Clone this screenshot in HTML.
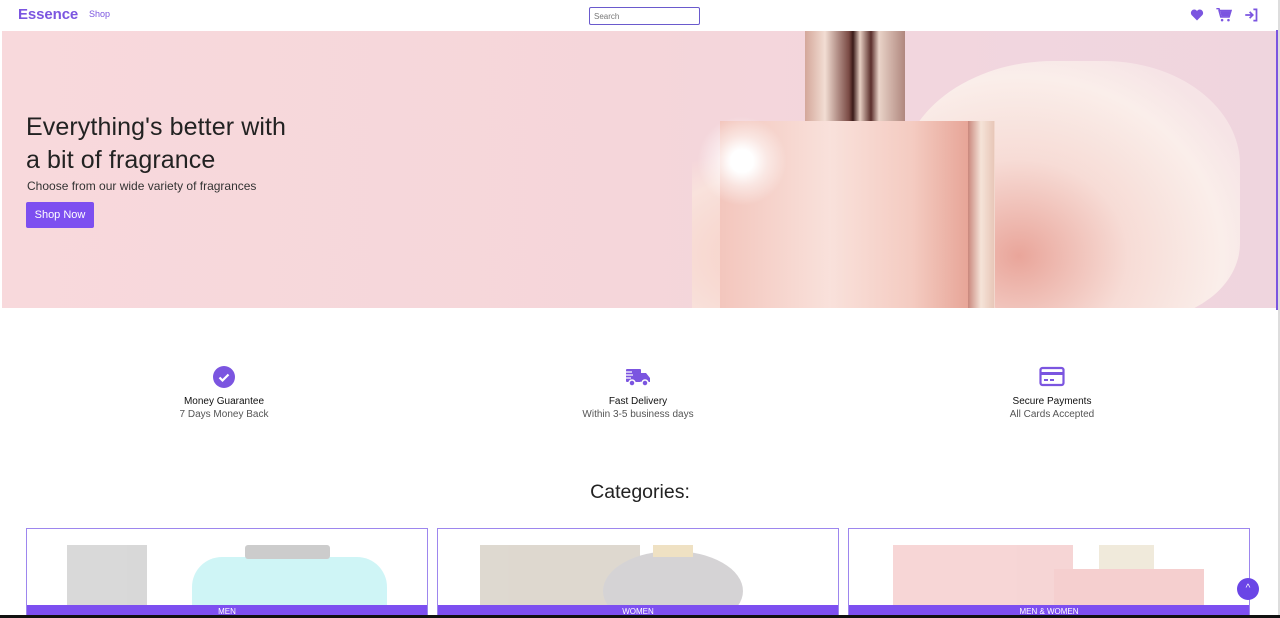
<!DOCTYPE html>
<html><head><meta charset="utf-8"><style>
*{margin:0;padding:0;box-sizing:border-box}
body{width:1280px;height:618px;overflow:hidden;background:#fff;font-family:"Liberation Sans",sans-serif;position:relative}
.nav{position:absolute;left:0;top:0;width:1280px;height:31px;background:#fff}
.logo{position:absolute;left:18px;top:6px;font-size:15px;color:#7b55e0;font-weight:bold;letter-spacing:-0.1px}
.shop{position:absolute;left:89px;top:9px;font-size:9px;color:#7b55e0}
.search{position:absolute;left:589px;top:7px;width:111px;height:18px;border:1px solid #6a5acd;border-radius:2px;font-size:8px;color:#777;padding:4px 4px}
.hero{position:absolute;left:2px;top:31px;width:1274px;height:277px;background:linear-gradient(90deg,#f8d9dc 0%,#f5d6da 50%,#f1d6df 80%,#efd5de 100%);overflow:hidden}
.rbar{position:absolute;left:1276px;top:30px;width:3px;height:280px;background:#7b55e0}
.rgrey{position:absolute;left:1278px;top:0;width:2px;height:618px;background:#ddd}
h1{position:absolute;left:26px;top:111px;font-size:25px;line-height:33px;font-weight:normal;color:#222;letter-spacing:0.1px}
.sub{position:absolute;left:27px;top:179px;font-size:12px;color:#333}
.btn{position:absolute;left:26px;top:202px;width:68px;height:26px;background:#7d4ff0;color:#fff;font-size:11px;border-radius:2px;text-align:center;line-height:26px}
.feat{position:absolute;width:200px;text-align:center}
.feat .t{font-size:10px;color:#111;margin-top:3px}
.feat .s{font-size:10px;color:#555;margin-top:2px}
.cat{position:absolute;left:0;width:1280px;top:481px;text-align:center;font-size:19.5px;color:#222}
.card{position:absolute;top:528px;width:402px;height:90px;border:1px solid #9d86ee;border-bottom:none;overflow:hidden;background:#fff}
.card .img{opacity:.75}
.lab{position:absolute;left:0;bottom:0;width:100%;height:13px;background:#7d4ff0;color:#fff;font-size:8px;text-align:center;line-height:13px}
.bottom{position:absolute;left:0;top:615px;width:1280px;height:3px;background:#111}
.up{position:absolute;left:1237px;top:578px;width:22px;height:22px;border-radius:50%;background:#6a45e6;color:#fff;font-size:10px;text-align:center;line-height:22px}
</style></head><body>
<div class="nav">
<div class="logo">Essence</div><div class="shop">Shop</div>
<div class="search">Search</div>
<svg style="position:absolute;left:1190px;top:9px" width="14" height="12" viewBox="0 0 24 22"><path d="M12 21 2 11C-1 7 2 1 7 1c2 0 4 1 5 3 1-2 3-3 5-3 5 0 8 6 5 10z" fill="#7b55e0"/></svg>
<svg style="position:absolute;left:1216px;top:8px" width="16" height="14" viewBox="0 0 24 22"><path d="M0 1h4l1 3h18l-3 10H7L4 3" fill="none" stroke="#7b55e0" stroke-width="2.5"/><path d="M6 5h16l-2.5 8H8z" fill="#7b55e0"/><circle cx="9" cy="19" r="2" fill="#7b55e0"/><circle cx="19" cy="19" r="2" fill="#7b55e0"/></svg>
<svg style="position:absolute;left:1244px;top:8px" width="15" height="14" viewBox="0 0 24 22"><path d="M2 11h12M9 6l5 5-5 5M15 2h5v18h-5" fill="none" stroke="#7b55e0" stroke-width="2.8"/></svg>
</div>
<div class="hero">
<div style="position:absolute;left:690px;top:110px;width:420px;height:190px;background:radial-gradient(ellipse at 40% 60%,#f4c3b8,#f9e2dc 60%,transparent 75%)"></div>
<div style="position:absolute;left:898px;top:30px;width:340px;height:260px;border-radius:45% 40% 30% 50%;background:radial-gradient(ellipse at 35% 75%,#e9a59a 0%,#f7dcd6 35%,#faeeea 65%,#f6e4e6 80%)"></div>
<div style="position:absolute;left:718px;top:90px;width:275px;height:190px;background:linear-gradient(90deg,#f3c6bd,#f9e1db 40%,#f4cbc1 70%,#e6a294 92%,#f2d8ce)"></div>
<div style="position:absolute;left:966px;top:90px;width:26px;height:190px;background:linear-gradient(90deg,#c9877c,#f5e3d8,#e8c7b8)"></div>
<div style="position:absolute;left:803px;top:0;width:100px;height:90px;background:linear-gradient(90deg,#d4a79a,#f2ddd3 20%,#7a4a44 44%,#3a1a18 48%,#e7cfc3 55%,#5a2e2a 66%,#e9d3c8 74%,#b0877e)"></div>
<div style="position:absolute;left:695px;top:85px;width:90px;height:90px;border-radius:50%;background:radial-gradient(circle,#fff 0%,#fff 18%,rgba(255,255,255,.5) 40%,transparent 70%)"></div>
</div>
<div class="rbar"></div><div class="rgrey"></div>
<h1>Everything's better with<br>a bit of fragrance</h1>
<div class="sub">Choose from our wide variety of fragrances</div>
<div class="btn">Shop Now</div>

<div class="feat" style="left:124px;top:366px">
<svg width="22" height="22" viewBox="0 0 22 22"><circle cx="11" cy="11" r="11" fill="#7b55e0"/><path d="M6.5 11.5l3 3 6-6" fill="none" stroke="#fff" stroke-width="2.2"/></svg>
<div class="t">Money Guarantee</div><div class="s">7 Days Money Back</div></div>
<div class="feat" style="left:538px;top:366px">
<svg width="28" height="22" viewBox="0 0 28 22"><rect x="2" y="3" width="15" height="13" rx="1" fill="#7b55e0"/><path d="M17 7h5l4 5v4h-9z" fill="#7b55e0"/><circle cx="8" cy="17" r="3" fill="#7b55e0" stroke="#fff" stroke-width="1.5"/><circle cx="21" cy="17" r="3" fill="#7b55e0" stroke="#fff" stroke-width="1.5"/><path d="M0 6h8M0 9h9M0 12h7" stroke="#fff" stroke-width="1.2"/></svg>
<div class="t">Fast Delivery</div><div class="s">Within 3-5 business days</div></div>
<div class="feat" style="left:952px;top:366px">
<svg width="26" height="22" viewBox="0 0 26 22"><rect x="1.5" y="2" width="23" height="17" rx="2" fill="none" stroke="#7b55e0" stroke-width="2.2"/><rect x="1.5" y="6" width="23" height="3" fill="#7b55e0"/><path d="M5 14h4M11 14h4" stroke="#7b55e0" stroke-width="2"/></svg>
<div class="t">Secure Payments</div><div class="s">All Cards Accepted</div></div>

<div class="cat">Categories:</div>
<div class="card" style="left:26px"><div class="img">
<div style="position:absolute;left:40px;top:16px;width:80px;height:70px;background:#ccc"></div>
<div style="position:absolute;left:165px;top:28px;width:195px;height:70px;border-radius:30px 30px 0 0;background:#bff2f4"></div>
<div style="position:absolute;left:218px;top:16px;width:85px;height:14px;background:#bbb;border-radius:3px"></div></div>
<div class="lab">MEN</div></div>
<div class="card" style="left:437px"><div class="img">
<div style="position:absolute;left:42px;top:16px;width:160px;height:70px;background:#d3ccc0"></div>
<div style="position:absolute;left:165px;top:22px;width:140px;height:80px;border-radius:50%;background:#c8c5c8"></div>
<div style="position:absolute;left:215px;top:16px;width:40px;height:12px;background:#ead8b0"></div></div>
<div class="lab">WOMEN</div></div>
<div class="card" style="left:848px"><div class="img">
<div style="position:absolute;left:44px;top:16px;width:180px;height:70px;background:#f4c8c8"></div>
<div style="position:absolute;left:205px;top:40px;width:150px;height:50px;background:#f2c0c0"></div>
<div style="position:absolute;left:250px;top:16px;width:55px;height:24px;background:#ece3d0"></div></div>
<div class="lab">MEN &amp; WOMEN</div></div>
<div class="up">&#94;</div>
<div class="bottom"></div>
</body></html>
